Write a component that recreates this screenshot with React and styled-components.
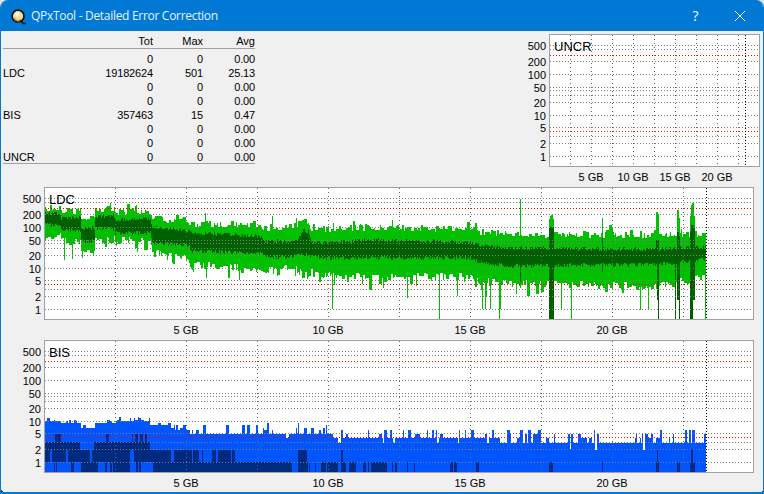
import React from "react";
import styled, { createGlobalStyle } from "styled-components";

const GlobalStyle = createGlobalStyle`
  html, body {
    margin: 0;
    padding: 0;
    background: #dfe3e6;
  }
  body {
    width: 764px;
    height: 494px;
    overflow: hidden;
    font-family: "Liberation Sans", Arial, sans-serif;
  }
`;

const rows = [
  ["", "0", "0", "0.00"],
  ["LDC", "19182624", "501", "25.13"],
  ["", "0", "0", "0.00"],
  ["", "0", "0", "0.00"],
  ["BIS", "357463", "15", "0.47"],
  ["", "0", "0", "0.00"],
  ["", "0", "0", "0.00"],
  ["UNCR", "0", "0", "0.00"],
];

const ticks = [
  ["500", 10],
  ["200", 26],
  ["100", 39],
  ["50", 52],
  ["20", 67],
  ["10", 80],
  ["5", 92],
  ["2", 108],
  ["1", 121],
];

const gridY = [10, 14, 26, 39, 52, 55, 60, 67, 80, 92, 101, 108, 121];
const redY = [20, 96];
const GB_LABELS = ["5 GB", "10 GB", "15 GB", "20 GB"];

function rng(seed) {
  let s = seed;
  return () => {
    s = (s * 1664525 + 1013904223) % 4294967296;
    return s / 4294967296;
  };
}

function lerp(points, x) {
  for (let i = 1; i < points.length; i++) {
    if (x <= points[i][0]) {
      const a = points[i - 1];
      const b = points[i];
      const t = (x - a[0]) / (b[0] - a[0] || 1);
      return a.slice(1).map((v, k) => v + (b[k + 1] - v) * t);
    }
  }
  return points[points.length - 1].slice(1);
}

// x, light top, light bottom, dark top, dark bottom (page pixels)
const ldcShape = [
  [45, 208, 234, 213, 225],
  [60, 208, 235, 213, 226],
  [61, 212, 241, 218, 230],
  [80, 212, 241, 218, 230],
  [81, 219, 251, 228, 241],
  [94, 219, 251, 228, 241],
  [95, 210, 238, 216, 228],
  [114, 210, 239, 216, 229],
  [115, 213, 239, 220, 233],
  [150, 212, 239, 218, 233],
  [152, 219, 251, 227, 243],
  [188, 221, 256, 230, 245],
  [192, 224, 264, 233, 251],
  [260, 225, 267, 236, 253],
  [265, 229, 270, 242, 257],
  [285, 228, 268, 241, 257],
  [298, 225, 265, 239, 255],
  [302, 223, 274, 231, 255],
  [308, 223, 274, 232, 255],
  [311, 228, 272, 242, 257],
  [330, 230, 274, 243, 258],
  [365, 228, 275, 240, 258],
  [470, 229, 276, 242, 258],
  [480, 233, 280, 245, 263],
  [510, 235, 283, 248, 266],
  [600, 235, 284, 249, 265],
  [660, 235, 285, 249, 264],
  [706, 235, 276, 247, 259],
];

// x, light top, light bottom, dark top, dark bottom
const ldcSpikes = {
  72: [0, 259, 0, 0],
  64: [0, 260, 0, 0],
  82: [0, 258, 0, 0],
  116: [0, 246, 0, 0],
  137: [0, 252, 0, 0],
  193: [0, 272, 0, 0],
  206: [0, 278, 0, 0],
  239: [0, 280, 0, 0],
  272: [216, 0, 0, 0],
  296: [218, 0, 0, 0],
  332: [0, 309, 0, 0],
  362: [0, 284, 0, 0],
  383: [0, 288, 0, 0],
  407: [0, 298, 0, 0],
  416: [0, 286, 0, 0],
  439: [0, 319, 0, 0],
  457: [0, 296, 0, 0],
  482: [0, 309, 0, 0],
  485: [0, 309, 0, 0],
  490: [0, 309, 0, 0],
  499: [0, 319, 0, 0],
  500: [0, 309, 0, 0],
  520: [199, 0, 0, 282],
  549: [219, 319, 227, 319],
  550: [216, 319, 227, 319],
  551: [215, 319, 227, 319],
  552: [215, 319, 227, 319],
  553: [219, 319, 227, 319],
  561: [0, 309, 0, 0],
  571: [0, 319, 0, 0],
  602: [218, 0, 238, 272],
  640: [0, 310, 0, 0],
  648: [0, 310, 0, 0],
  656: [212, 0, 240, 0],
  657: [212, 0, 240, 300],
  658: [214, 319, 240, 319],
  675: [0, 319, 0, 319],
  677: [210, 300, 232, 300],
  678: [210, 300, 232, 300],
  679: [218, 300, 236, 319],
  690: [216, 300, 232, 319],
  691: [205, 303, 225, 319],
  692: [203, 303, 225, 319],
  693: [203, 300, 225, 300],
  694: [216, 296, 228, 300],
  705: [0, 319, 0, 0],
};

function buildLdc() {
  const r = rng(4711);
  const light = [];
  const dark = [];
  let topHold = 0;
  let botHold = 0;
  let topRun = 0;
  let botRun = 0;
  for (let x = 45; x < 706; x++) {
    const [t, b, dt, db] = lerp(ldcShape, x);
    if (topRun-- <= 0) {
      topRun = Math.floor(r() * 3);
      topHold = 3 - r() * 7;
      if (r() < 0.12) topHold -= r() * 8;
    }
    if (botRun-- <= 0) {
      botRun = Math.floor(r() * 3);
      botHold = r() * 8 - 3;
      if (r() < 0.22) botHold += r() * (x > 330 ? 13 : 8);
    }
    let top = t + topHold;
    let bot = b + botHold;
    let dTop = dt + 2 - r() * 4;
    let dBot = db + r() * 4 - 2;
    const spike = ldcSpikes[x];
    if (spike) {
      if (spike[0]) top = spike[0];
      if (spike[1]) bot = spike[1];
      if (spike[2]) dTop = spike[2];
      if (spike[3]) dBot = spike[3];
    }
    light.push(`M${x - 45 + 0.5} ${Math.round(top) - 188}V${Math.round(bot) - 188}`);
    dark.push(`M${x - 45 + 0.5} ${Math.round(dTop) - 188}V${Math.round(dBot) - 188}`);
  }
  return { light: light.join(""), dark: dark.join("") };
}

const bisY = (v) => Math.round(462.3 - 41 * Math.log10(v));

// x from, x to, base value, chance of a bump, size of a bump
const bisShape = [
  [45, 60, 10, 0.3, 3],
  [60, 80, 9, 0.25, 2],
  [80, 94, 7, 0.2, 1],
  [94, 115, 9, 0.3, 2],
  [115, 150, 10, 0.4, 3],
  [150, 170, 8, 0.3, 1],
  [170, 190, 6, 0.3, 2],
  [190, 260, 5, 0.3, 3],
  [260, 330, 5, 0.3, 4],
  [330, 500, 4, 0.35, 2],
  [500, 706, 3, 0.28, 3],
];

// chance that a stretch is dark in the two low bands
const bisBands = [
  [45, 80, 0.93, 0.05],
  [80, 97, 0.95, 1],
  [97, 113, 0.95, 0.3],
  [113, 127, 0.95, 1],
  [127, 152, 0.95, 0.3],
  [152, 192, 0.97, 1],
  [192, 233, 0.6, 1],
  [233, 290, 0.05, 0.98],
  [290, 298, 0.03, 0.3],
  [298, 307, 1, 1],
  [307, 370, 0.03, 0.5],
  [370, 385, 0, 0.95],
  [385, 470, 0, 0.12],
  [470, 500, 0, 0.15],
  [500, 706, 0, 0],
];

const bisExtra = [
  [549, 553, 462],
  [602, 603, 462],
  [656, 659, 462],
  [657, 658, 450],
  [677, 680, 462],
  [690, 695, 462],
  [691, 693, 449],
];

function buildBis() {
  const r = rng(90210);
  const light = [];
  const dark = [];
  let x = 45;
  while (x < 706) {
    const seg = bisShape.find((s) => x < s[1]);
    const width = 1 + Math.floor(r() * 3);
    let v = seg[2];
    if (r() < seg[3]) v += 1 + Math.floor(r() * seg[4]);
    if (x > 260 && r() < 0.05) v = Math.max(2, seg[2] - 1);
    const band = bisBands.find((s) => x < s[1]);
    const lowBand = r() < band[2];
    const lowest = r() < band[3];
    for (let i = 0; i < width && x < 706; i++, x++) {
      const px = x - 45 + 0.5;
      light.push(`M${px} ${bisY(v) - 341}V131`);
      if (lowBand) dark.push(`M${px} ${450 - 341}V${462 - 341}`);
      if (lowest) dark.push(`M${px} ${462 - 341}V131`);
      if ((x < 80 && x >= 45) || (x >= 94 && x < 150)) {
        dark.push(`M${px} ${442 - 341}V${450 - 341}`);
      }
      if ((x >= 55 && x < 61) || (x >= 106 && x < 109) || (x >= 132 && x < 147 && x % 5 < 3)) {
        dark.push(`M${px} ${434 - 341}V${442 - 341}`);
      }
    }
  }
  bisExtra.forEach(([from, to, top]) => {
    for (let c = from; c < to; c++) dark.push(`M${c - 45 + 0.5} ${top - 341}V131`);
  });
  return { light: light.join(""), dark: dark.join("") };
}

const ldcData = buildLdc();
const bisData = buildBis();

const App = () => (
  <>
    <GlobalStyle />
    <Window>
      <TitleBar>
        <AppIcon />
        <TitleText>QPxTool - Detailed Error Correction</TitleText>
        <HelpButton>?</HelpButton>
        <CloseButton>
          <svg width="12" height="12" viewBox="0 0 12 12">
            <path d="M1 1L11 11M11 1L1 11" stroke="#fff" strokeWidth="1" fill="none" />
          </svg>
        </CloseButton>
      </TitleBar>
      <Body>
        <TopRow>
          <Stats>
            <HeadCell />
            <HeadCell>Tot</HeadCell>
            <HeadCell>Max</HeadCell>
            <HeadCell>Avg</HeadCell>
            {rows.map((row, i) => (
              <React.Fragment key={i}>
                <NameCell>{row[0]}</NameCell>
                <NumCell>{row[1]}</NumCell>
                <NumCell>{row[2]}</NumCell>
                <NumCell>{row[3]}</NumCell>
              </React.Fragment>
            ))}
            <StatsEnd />
          </Stats>
          <Chart label="UNCR" plotWidth={211} step={21} start={20} marker={195} small />
        </TopRow>
        <Chart label="LDC" plotWidth={710} step={71} start={70} marker={661} data={ldcData} colors={["#00c000", "#006000"]} />
        <Chart label="BIS" plotWidth={710} step={71} start={70} marker={661} data={bisData} colors={["#0055ff", "#002a80"]} />
      </Body>
      <CornerLeft />
      <CornerRight />
    </Window>
  </>
);

export default App;

const AppIcon = () => (
  <IconSvg width="16" height="16" viewBox="0 0 17 17">
    <circle cx="7.5" cy="7.5" r="6.3" fill="#f3dc9a" stroke="#111" strokeWidth="1.8" />
    <circle cx="7" cy="5.5" r="2.4" fill="#fff8e6" />
    <path d="M3.5 9.5a4.5 4.5 0 0 0 7.5 1.5" stroke="#d9902a" strokeWidth="1.5" fill="none" />
    <path d="M10 12l3 3.4h3" stroke="#111" strokeWidth="1.8" fill="none" />
  </IconSvg>
);

const Chart = ({ label, plotWidth, step, start, marker, data, colors, small }) => {
  const width = plotWidth - 2;
  const lines = [];
  for (let x = start; x < width - 2; x += step) lines.push(x);
  return (
    <ChartBox $small={small}>
      <PlotRow>
        <YAxis $small={small}>
          {ticks.map(([text, y]) => (
            <Tick key={text} $y={y}>
              {text}
            </Tick>
          ))}
        </YAxis>
        <Plot $width={plotWidth}>
          <svg width={width} height="131" shapeRendering="crispEdges">
            {data && (
              <>
                <path d={data.light} stroke={colors[0]} fill="none" />
                <path d={data.dark} stroke={colors[1]} fill="none" />
              </>
            )}
            {gridY.map((y) => (
              <line key={y} x1="0" x2={width} y1={y + 0.5} y2={y + 0.5} stroke="#808080" strokeDasharray="1 2" />
            ))}
            {lines.map((x) => (
              <line key={x} x1={x + 0.5} x2={x + 0.5} y1="0" y2="131" stroke="#666666" strokeDasharray="1 3" />
            ))}
            {redY.map((y) => (
              <line key={y} x1="0" x2={width} y1={y + 0.5} y2={y + 0.5} stroke="#ff0000" strokeDasharray="1 2" />
            ))}
            <line x1={marker + 0.5} x2={marker + 0.5} y1="0" y2="131" stroke="#000" strokeDasharray="1 2" />
          </svg>
          <PlotLabel>{label}</PlotLabel>
        </Plot>
      </PlotRow>
      <XAxis $step={step}>
        {GB_LABELS.map((text) => (
          <XLabel key={text} $step={step}>
            {text}
          </XLabel>
        ))}
      </XAxis>
    </ChartBox>
  );
};

const Window = styled.div`
  position: relative;
  box-sizing: border-box;
  width: 764px;
  height: 494px;
  display: flex;
  flex-direction: column;
  background: #f0f0f0;
  border: 1px solid #0078d4;
  border-top: 0;
  border-bottom-width: 2px;
  border-radius: 8px 8px 0 0;
  overflow: hidden;
`;

const TitleBar = styled.div`
  flex: none;
  height: 31px;
  display: flex;
  align-items: center;
  background: #0078d4;
  color: #fff;
  padding-left: 10px;
`;

const IconSvg = styled.svg`
  flex: none;
  margin-right: 4px;
  margin-top: 2px;
`;

const TitleText = styled.div`
  flex: 1;
  font-family: "Open Sans", "Noto Sans", sans-serif;
  font-size: 12px;
  letter-spacing: -0.3px;
  color: #eaf4fc;
`;

const HelpButton = styled.div`
  width: 46px;
  padding-left: 3px;
  box-sizing: border-box;
  text-align: center;
  font-family: "Open Sans", sans-serif;
  font-size: 14px;
`;

const CloseButton = styled.div`
  width: 46px;
  height: 31px;
  display: flex;
  align-items: center;
  justify-content: center;
`;

const Body = styled.div`
  flex: 1;
  display: flex;
  flex-direction: column;
  min-height: 0;
`;

const TopRow = styled.div`
  height: 156px;
  padding-top: 3px;
  box-sizing: border-box;
  display: flex;
  justify-content: space-between;
`;

const Stats = styled.div`
  width: 252px;
  margin-left: 2px;
  display: grid;
  grid-template-columns: 100px 50px 50px 52px;
  grid-auto-rows: 14px;
  font-size: 11px;
  line-height: 14px;
  color: #000;
`;

const HeadCell = styled.div`
  text-align: right;
  height: 14px;
  box-shadow: 0 1px 0 #a0a0a0;
  margin-bottom: 4px;
`;

const NameCell = styled.div`
  position: relative;
  top: 4px;
`;

const NumCell = styled(NameCell)`
  text-align: right;
  letter-spacing: -0.15px;
`;

const StatsEnd = styled.div`
  grid-column: 1 / -1;
  height: 1px;
  margin-top: 3px;
  background: #a0a0a0;
`;

const ChartBox = styled.div`
  flex: none;
  display: flex;
  flex-direction: column;
  height: 153px;
  margin-right: ${(p) => (p.$small ? "3px" : "9px")};
  align-self: ${(p) => (p.$small ? "flex-start" : "stretch")};
`;

const PlotRow = styled.div`
  display: flex;
  height: 133px;
`;

const YAxis = styled.div`
  position: relative;
  flex: none;
  width: ${(p) => (p.$small ? "28px" : "43px")};
  font-size: 11px;
`;

const Tick = styled.span`
  position: absolute;
  right: 3px;
  top: ${(p) => p.$y - 5}px;
  line-height: 14px;
  color: #000;
`;

const Plot = styled.div`
  position: relative;
  box-sizing: border-box;
  flex: none;
  width: ${(p) => p.$width}px;
  height: 133px;
  background: #fff;
  border: 1px solid #a0a0a0;

  svg {
    display: block;
  }
`;

const PlotLabel = styled.span`
  position: absolute;
  left: 4px;
  top: 4px;
  font-size: 13px;
  line-height: 16px;
  color: #000;
`;

const XAxis = styled.div`
  display: flex;
  height: 20px;
  align-items: center;
  margin-left: ${(p) => (p.$step === 21 ? 28 + 21 : 43 + 71)}px;
`;

const XLabel = styled.span`
  flex: none;
  width: ${(p) => p.$step * 2}px;
  text-align: center;
  font-size: 11px;
  color: #000;
`;

const CornerLeft = styled.div`
  position: absolute;
  left: -1px;
  bottom: -2px;
  width: 5px;
  height: 5px;
  background: linear-gradient(45deg, #00487f 50%, transparent 50%);
`;

const CornerRight = styled.div`
  position: absolute;
  right: -1px;
  bottom: -2px;
  width: 5px;
  height: 5px;
  background: linear-gradient(-45deg, #00487f 50%, transparent 50%);
`;
